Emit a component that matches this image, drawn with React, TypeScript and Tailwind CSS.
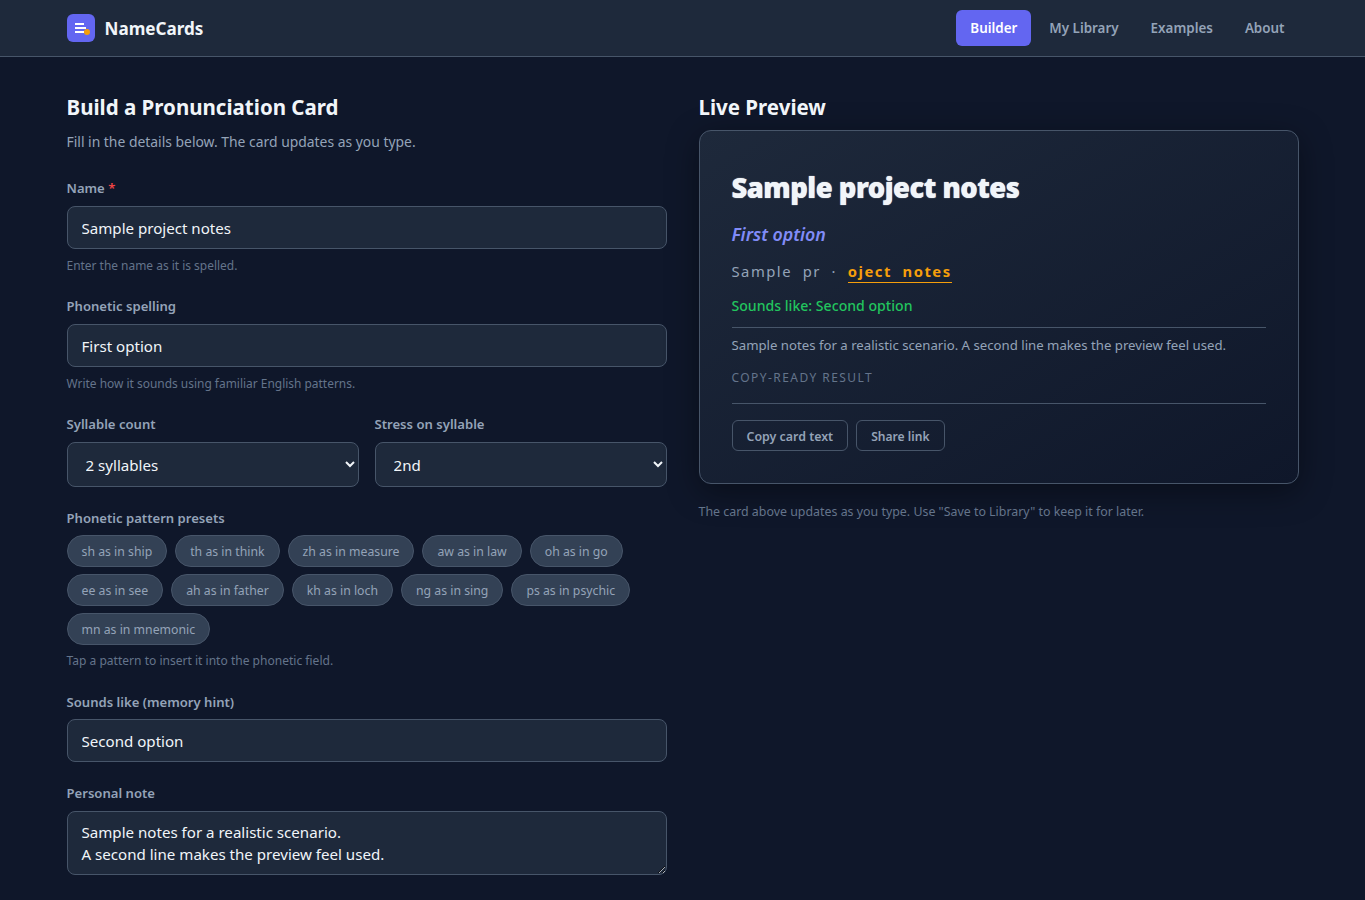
const chips = [
  "sh as in ship",
  "th as in think",
  "zh as in measure",
  "aw as in law",
  "oh as in go",
  "ee as in see",
  "ah as in father",
  "kh as in loch",
  "ng as in sing",
  "ps as in psychic",
  "mn as in mnemonic",
];

const inputClass =
  "block w-full rounded-lg border border-[#475569] bg-[#1e293b] px-[14px] text-[15.1px] text-[#f1f5f9] outline-none";

const navClass = "rounded-md px-[14px] py-2 text-[13.4px] leading-5 font-semibold";

const Label = ({ children }: { children: React.ReactNode }) => (
  <label className="mb-[9px] block text-[13.1px] leading-[18px] font-semibold text-[#94a3b8]">{children}</label>
);

const Hint = ({ children }: { children: React.ReactNode }) => (
  <p className="mt-[8px] text-[11.95px] leading-[17px] text-[#64748b]">{children}</p>
);

const App = () => {
  return (
    <div className="min-h-[900px] bg-[#0f172a] font-['Noto_Sans','Open_Sans',sans-serif] text-[#f1f5f9]">
      <header className="h-[57px] border-b border-[#475569] bg-[#1e293b]">
        <div className="mx-auto flex h-14 max-w-[1280px] items-center justify-between px-6">
          <div className="flex items-center gap-[10px]">
            <div className="flex h-7 w-7 items-center justify-center rounded-md bg-[#6366f1]">
              <svg width="28" height="28" viewBox="0 0 28 28">
                <rect x="8" y="9" width="9" height="2" fill="#fff" />
                <rect x="8" y="13" width="11" height="2" fill="#fff" />
                <rect x="8" y="17" width="9" height="2" fill="#fff" />
                <circle cx="20" cy="18" r="3" fill="#f59e0b" />
              </svg>
            </div>
            <span className="pt-[1px] text-[17.1px] font-bold text-[#f1f5f9]">NameCards</span>
          </div>
          <nav className="flex items-center gap-1">
            <a className={`${navClass} bg-[#6366f1] text-white`}>Builder</a>
            <a className={`${navClass} text-[#94a3b8]`}>My Library</a>
            <a className={`${navClass} text-[#94a3b8]`}>Examples</a>
            <a className={`${navClass} text-[#94a3b8]`}>About</a>
          </nav>
        </div>
      </header>

      <main className="mx-auto grid max-w-[1280px] grid-cols-2 gap-8 px-6 pt-[34px]">
        <section>
          <h2 className="text-[20.5px] leading-[32px] font-bold text-[#f1f5f9]">Build a Pronunciation Card</h2>
          <p className="mt-[8px] text-[13.9px] leading-[21px] text-[#94a3b8]">Fill in the details below. The card updates as you type.</p>

          <div className="mt-[27px]">
            <Label>
              Name <span className="text-[#ef4444]">*</span>
            </Label>
            <input readOnly value="Sample project notes" className={`${inputClass} h-[43px]`} />
            <Hint>Enter the name as it is spelled.</Hint>
          </div>

          <div className="mt-[23px]">
            <Label>Phonetic spelling</Label>
            <input readOnly value="First option" className={`${inputClass} h-[43px]`} />
            <Hint>Write how it sounds using familiar English patterns.</Hint>
          </div>

          <div className="mt-[23px] grid grid-cols-2 gap-4">
            <div>
              <Label>Syllable count</Label>
              <select defaultValue="2 syllables" className={`${inputClass} h-[45px]`}>
                <option>1 syllable</option>
                <option>2 syllables</option>
                <option>3 syllables</option>
              </select>
            </div>
            <div>
              <Label>Stress on syllable</Label>
              <select defaultValue="2nd" className={`${inputClass} h-[45px]`}>
                <option>1st</option>
                <option>2nd</option>
              </select>
            </div>
          </div>

          <div className="mt-[22px]">
            <label className="mb-[8px] block text-[13.1px] leading-[18px] font-semibold text-[#94a3b8]">Phonetic pattern presets</label>
            <div className="flex flex-wrap gap-x-2 gap-y-[7px]">
              {chips.map((chip) => (
                <button
                  key={chip}
                  className="h-8 rounded-full border border-[#475569] bg-[#334155] px-[14px] pt-[2px] text-[12.28px] text-[#94a3b8]"
                >
                  {chip}
                </button>
              ))}
            </div>
            <p className="mt-[7px] text-[12.05px] leading-[17px] text-[#64748b]">Tap a pattern to insert it into the phonetic field.</p>
          </div>

          <div className="mt-[24px]">
            <label className="mb-[8px] block text-[13.1px] leading-[18px] font-semibold text-[#94a3b8]">Sounds like (memory hint)</label>
            <input readOnly value="Second option" className={`${inputClass} h-[43px]`} />
          </div>

          <div className="mt-[22px]">
            <Label>Personal note</Label>
            <textarea
              readOnly
              value={"Sample notes for a realistic scenario.\nA second line makes the preview feel used."}
              className={`${inputClass} h-[64px] py-[9px] leading-[22px]`}
            />
          </div>
        </section>

        <section>
          <h2 className="text-[20.5px] leading-[32px] font-bold text-[#f1f5f9]">Live Preview</h2>
          <div className="mt-[7px] h-[354px] rounded-xl border border-[#475569] bg-gradient-to-br from-[#1e293b] to-[#0f172a] px-8 pt-[38px] shadow-[0_8px_32px_rgba(0,0,0,0.4)]">
            <h3 className="text-[27.4px] leading-[38px] font-black tracking-[-0.5px] text-[#f1f5f9] [text-shadow:0_0_1px_#f1f5f9]">Sample project notes</h3>
            <p className="mt-[15px] text-[17.8px] leading-[24px] font-semibold text-[#818cf8] italic">First option</p>
            <p className="mt-[14px] text-[14.8px] leading-[22px] tracking-[1.5px] text-[#94a3b8]">
              <span className="whitespace-pre">Sample  pr  ·  </span>
              <span className="border-b border-[#f59e0b] pb-[1px] font-bold whitespace-pre text-[#f59e0b]">oject  notes</span>
            </p>
            <p className="mt-[14px] text-[14.1px] leading-5 font-medium text-[#22c55e]">Sounds like: Second option</p>
            <p className="mt-[11px] border-t border-[#475569] pt-[7px] text-[13.2px] leading-5 text-[#94a3b8]">
              Sample notes for a realistic scenario. A second line makes the preview feel used.
            </p>
            <p className="mt-[15px] text-[12px] leading-4 tracking-[1.44px] text-[#64748b]">COPY-READY RESULT</p>
            <div className="mt-[17px] flex gap-2 border-t border-[#475569] pt-4">
              <button className="h-[31px] rounded-md border border-[#475569] px-[14px] pt-1 text-[12.4px] font-semibold text-[#94a3b8]">Copy card text</button>
              <button className="h-[31px] rounded-md border border-[#475569] px-[14px] pt-1 text-[12.1px] font-semibold text-[#94a3b8]">Share link</button>
            </div>
          </div>
          <p className="mt-[19px] text-[12.4px] leading-[17px] text-[#64748b]">
            The card above updates as you type. Use "Save to Library" to keep it for later.
          </p>
        </section>
      </main>
    </div>
  );
};

export default App;
